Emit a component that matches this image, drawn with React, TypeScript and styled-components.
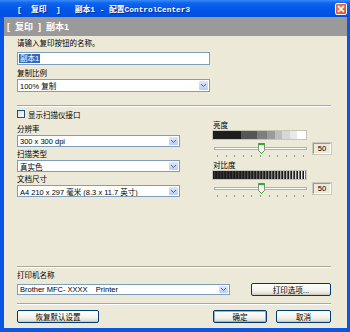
import React from "react";
import styled, { createGlobalStyle } from "styled-components";

const GlobalStyle = createGlobalStyle`
  html, body {
    margin: 0;
    padding: 0;
    background: #ffffff;
  }
  * {
    box-sizing: border-box;
  }
`;

const UI_FONT = `"Liberation Sans", "Noto Sans CJK SC", sans-serif`;

const TICKS = Array.from({ length: 11 }, (_, i) => 4 + i * 8.6);

const BRIGHT_STEPS: [number, string][] = [
  [28, "#1e1e1e"],
  [16, "#555555"],
  [10, "#7e7e7e"],
  [8, "#9b9b9b"],
  [7, "#bdbdbd"],
  [8, "#d6d6d6"],
  [7, "#e9e9e9"],
  [9, "#ffffff"],
];

const App = () => {
  return (
    <>
      <GlobalStyle />
      <StWindow>
        <StTitleBar>
          <StTitleText>{"[  复印  ]   副本1 - 配置ControlCenter3"}</StTitleText>
          <StCloseBtn>
            <svg width="8" height="8" viewBox="0 0 8 8">
              <path d="M1 1 L7 7 M7 1 L1 7" stroke="#fff" strokeWidth="1.6" />
            </svg>
          </StCloseBtn>
        </StTitleBar>
        <StFrame>
          <StBody>
            <StHeader>{"[  复印  ]  副本1"}</StHeader>
            <StContent>
              <StLabel $mt={3}>请输入复印按钮的名称。</StLabel>
              <StInput $mt={3}>
                <StSelected>副本1</StSelected>
              </StInput>
              <StLabel $mt={4}>复制比例</StLabel>
              <Combo width={193} height={13} text="100% 复制" />
              <StSeparator $mt={13} />
              <StCheckRow>
                <StCheckbox />
                <span>显示扫描仪接口</span>
              </StCheckRow>
              <StColumns>
                <StColumn>
                  <StLabel $mt={7}>分辨率</StLabel>
                  <Combo width={163} height={12} text="300 x 300 dpi" />
                  <StLabel $mt={3}>扫描类型</StLabel>
                  <Combo width={163} height={12} text="真实色" />
                  <StLabel $mt={3}>文档尺寸</StLabel>
                  <Combo
                    width={163}
                    height={12}
                    text="A4 210 x 297 毫米 (8.3 x 11.7 英寸)"
                  />
                </StColumn>
                <StColumn>
                  <StLabel $mt={3}>亮度</StLabel>
                  <StBar>
                    <svg width="93" height="8">
                      {BRIGHT_STEPS.reduce<{ x: number; els: React.ReactNode[] }>(
                        (acc, [w, c], i) => {
                          acc.els.push(
                            <rect key={i} x={acc.x} y={0} width={w} height={8} fill={c} />
                          );
                          acc.x += w;
                          return acc;
                        },
                        { x: 0, els: [] }
                      ).els}
                    </svg>
                  </StBar>
                  <Slider value="50" />
                  <StLabel $mt={3}>对比度</StLabel>
                  <StBar>
                    <svg width="93" height="8">
                      <rect width="93" height="8" fill="#1a1a1a" />
                      {Array.from({ length: 31 }, (_, i) => {
                        const t = i / 30;
                        const v = Math.round(50 + t * t * 205);
                        return (
                          <rect
                            key={i}
                            x={i * 3 + 1}
                            y={0}
                            width={1.4}
                            height={8}
                            fill={`rgb(${v},${v},${v})`}
                          />
                        );
                      })}
                    </svg>
                  </StBar>
                  <Slider value="50" />
                </StColumn>
              </StColumns>
              <StBottom>
                <StSeparator />
                <StLabel $mt={3}>打印机名称</StLabel>
                <StPrinterRow>
                  <Combo width={213} height={11} text="Brother MFC- XXXX    Printer" />
                  <StButton $w={80}>打印选项...</StButton>
                </StPrinterRow>
                <StSeparator $mt={7} />
                <StButtonRow>
                  <StButton $w={82}>恢复默认设置</StButton>
                  <StRight>
                    <StButton $w={54} $default>
                      确定
                    </StButton>
                    <StButton $w={55}>取消</StButton>
                  </StRight>
                </StButtonRow>
              </StBottom>
            </StContent>
          </StBody>
        </StFrame>
      </StWindow>
    </>
  );
};

const Combo = ({
  width,
  height,
  text,
}: {
  width: number;
  height: number;
  text: string;
}) => (
  <StCombo style={{ width, height }}>
    <StComboText>{text}</StComboText>
    <StComboBtn>
      <svg width="5" height="3" viewBox="0 0 5 3">
        <path d="M0 0 L2.5 2.5 L5 0" stroke="#4d6185" strokeWidth="1" fill="none" />
      </svg>
    </StComboBtn>
  </StCombo>
);

const Slider = ({ value }: { value: string }) => (
  <>
    <StSliderRow>
      <svg width="95" height="13">
        <rect x="1.5" y="5.5" width="92" height="2" fill="#ffffff" stroke="#b3b1a8" />
        <path
          d="M45.5 1.5 H51.5 V8.5 L48.5 11.5 L45.5 8.5 Z"
          fill="#f4f3ee"
          stroke="#8c8b86"
        />
        <rect x="45.5" y="1" width="6" height="2" fill="#1fb51f" />
        <path d="M46 9 L48.5 11.5 L51 9" stroke="#2ea72e" fill="none" />
      </svg>
      <StValueBox>{value}</StValueBox>
    </StSliderRow>
    <StTicks>
      <svg width="95" height="3">
        {TICKS.map((x, i) => (
          <rect key={i} x={Math.round(x)} y={0} width={1} height={2} fill="#9a9890" />
        ))}
      </svg>
    </StTicks>
  </>
);

export default App;

const StWindow = styled.div`
  width: 350px;
  height: 332px;
  display: flex;
  flex-direction: column;
  background: #0a56e4;
  font-family: ${UI_FONT};
`;

const StTitleBar = styled.div`
  height: 17px;
  flex: none;
  display: flex;
  align-items: center;
  justify-content: space-between;
  padding: 0 3px 0 17px;
  background: linear-gradient(
    #3a8cf8 0%,
    #0f64f0 18%,
    #0356e6 55%,
    #0250df 100%
  );
`;

const StTitleText = styled.span`
  color: #ffffff;
  font-family: "Liberation Mono", "Noto Sans CJK SC", monospace;
  font-weight: bold;
  font-size: 7.8px;
  white-space: pre;
  text-shadow: 1px 1px 0 #0a2f8a;
`;

const StCloseBtn = styled.div`
  width: 12px;
  height: 12px;
  display: flex;
  align-items: center;
  justify-content: center;
  border: 1px solid #ffffff;
  border-radius: 2px;
  background: radial-gradient(circle at 40% 40%, #f08a66, #d9461d);
`;

const StFrame = styled.div`
  flex: 1;
  display: flex;
  padding: 0 3px 4px 4px;
`;

const StBody = styled.div`
  flex: 1;
  display: flex;
  flex-direction: column;
  background: #ece9d8;
`;

const StHeader = styled.div`
  height: 19px;
  flex: none;
  display: flex;
  align-items: center;
  padding-left: 3px;
  background: #9a9a9a;
  color: #ffffff;
  font-size: 9px;
  font-weight: 600;
  white-space: pre;
`;

const StContent = styled.div`
  flex: 1;
  display: flex;
  flex-direction: column;
  padding: 0 16px 5px 13px;
  font-size: 7.5px;
  color: #000000;
`;

const StLabel = styled.div<{ $mt?: number }>`
  height: 9px;
  line-height: 9px;
  margin-top: ${(p) => p.$mt ?? 0}px;
  margin-bottom: 1px;
  font-size: 7.5px;
  white-space: nowrap;
`;

const StInput = styled.div<{ $mt?: number }>`
  width: 193px;
  height: 13px;
  margin-top: ${(p) => p.$mt ?? 0}px;
  border: 1px solid #7f9db9;
  background: #ffffff;
  display: flex;
  align-items: center;
  padding-left: 1px;
`;

const StSelected = styled.span`
  background: #316ac5;
  color: #ffffff;
  line-height: 9px;
  padding: 0 1px;
`;

const StCombo = styled.div`
  flex: none;
  display: flex;
  align-items: stretch;
  border: 1px solid #7f9db9;
  background: #ffffff;
`;

const StComboText = styled.div`
  flex: 1;
  display: flex;
  align-items: center;
  padding-left: 2px;
  white-space: pre;
  overflow: hidden;
`;

const StComboBtn = styled.div`
  width: 9px;
  margin: 1px;
  display: flex;
  align-items: center;
  justify-content: center;
  border-radius: 1px;
  background: linear-gradient(#dce6fd, #b9cdf7);
`;

const StSeparator = styled.div<{ $mt?: number }>`
  height: 2px;
  flex: none;
  margin-top: ${(p) => p.$mt ?? 0}px;
  border-top: 1px solid #aca899;
  border-bottom: 1px solid #ffffff;
`;

const StCheckRow = styled.div`
  margin-top: 3px;
  height: 8px;
  display: flex;
  align-items: center;
  gap: 3px;
  white-space: nowrap;
`;

const StCheckbox = styled.div`
  width: 8px;
  height: 8px;
  border: 1px solid #1c5180;
  background: linear-gradient(135deg, #dcdbd5, #ffffff);
`;

const StColumns = styled.div`
  display: grid;
  grid-template-columns: 163px 1fr;
  column-gap: 33px;
`;

const StColumn = styled.div`
  display: flex;
  flex-direction: column;
`;

const StBar = styled.div`
  width: 93px;
  height: 8px;
  display: flex;
  outline: 1px solid #c8c5b8;
`;

const StSliderRow = styled.div`
  margin-top: 3px;
  height: 13px;
  display: flex;
  align-items: center;
  gap: 5px;
`;

const StValueBox = styled.div`
  width: 18px;
  height: 11px;
  display: flex;
  align-items: center;
  justify-content: center;
  border: 1px solid #9b9a95;
  border-right-color: #ffffff;
  border-bottom-color: #ffffff;
  outline: 1px solid #c9c7bc;
  font-size: 7.5px;
`;

const StTicks = styled.div`
  height: 3px;
  display: flex;
`;

const StBottom = styled.div`
  margin-top: auto;
  display: flex;
  flex-direction: column;
`;

const StPrinterRow = styled.div`
  margin-top: 2px;
  height: 13px;
  display: flex;
  align-items: center;
  justify-content: space-between;
`;

const StButtonRow = styled.div`
  margin-top: 5px;
  display: flex;
  justify-content: space-between;
`;

const StRight = styled.div`
  display: flex;
  gap: 9px;
`;

const StButton = styled.div<{ $w: number; $default?: boolean }>`
  width: ${(p) => p.$w}px;
  height: 13px;
  flex: none;
  display: flex;
  align-items: center;
  justify-content: center;
  border: 1px solid #003c74;
  border-radius: 2px;
  background: linear-gradient(#ffffff 0%, #f3f2ec 60%, #d9d6c8 100%);
  box-shadow: ${(p) =>
    p.$default ? "inset 0 0 0 1px #8fb2ee" : "inset 0 -1px 0 #cdcabb"};
  font-size: 7.5px;
  white-space: nowrap;
`;
